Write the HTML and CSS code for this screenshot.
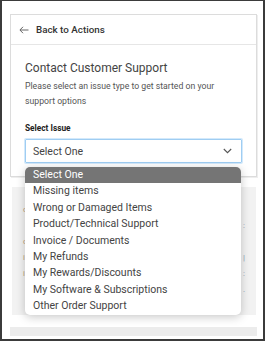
FILE: index.html
```html
<!DOCTYPE html>
<html>
<head>
<meta charset="utf-8">
<link rel="stylesheet" href="styles.css">
</head>
<body>
<div class="frame">
  <div class="card">
    <div class="card-head">
      <svg class="back-icon" width="10" height="8" viewBox="0 0 10 8"><path d="M9.5 4H1M4 0.8L0.9 4L4 7.2" fill="none" stroke="#666" stroke-width="1"/></svg>
      <span class="back-text">Back to Actions</span>
    </div>
    <div class="card-body">
      <h1 class="title">Contact Customer Support</h1>
      <p class="desc">Please select an issue type to get started on your support options</p>
      <div class="label">Select Issue</div>
      <div class="select">
        <span>Select One</span>
        <svg class="chev" width="9" height="6" viewBox="0 0 9 6"><path d="M0.8 1L4.5 4.7L8.2 1" fill="none" stroke="#555" stroke-width="1.1"/></svg>
      </div>
    </div>
  </div>
  <div class="under">
    <div class="under-row"><span class="mk">c</span><span class="mk-r"></span></div>
    <div class="under-row"><span class="mk"></span><span class="mk-r">:</span></div>
    <div class="under-row"><span class="mk">c</span><span class="mk-r"></span></div>
    <div class="under-row"><span class="mk">i</span><span class="mk-r">|</span></div>
    <div class="under-row"><span class="mk">i</span><span class="mk-r">:</span></div>
    <div class="under-row"><span class="mk"></span><span class="mk-r">.</span></div>
  </div>
  <div class="bottom-strip"></div>
  <ul class="menu">
    <li class="active">Select One</li>
    <li>Missing items</li>
    <li>Wrong or Damaged Items</li>
    <li>Product/Technical Support</li>
    <li>Invoice / Documents</li>
    <li>My Refunds</li>
    <li>My Rewards/Discounts</li>
    <li>My Software &amp; Subscriptions</li>
    <li>Other Order Support</li>
  </ul>
</div>
</body>
</html>
```
FILE: styles.css
```css
* { box-sizing: border-box; }
html, body { margin: 0; padding: 0; background: #fff; }
body { font-family: Roboto, "Liberation Sans", sans-serif; color: #444; }
.frame {
  position: relative;
  width: 265px;
  height: 341px;
  border: 2px solid #3b3b3b;
  border-top-width: 1px;
  padding: 13px 0 0 8px;
  overflow: hidden;
  background: #fff;
}
.card {
  width: 247px;
  border: 1px solid #dcdcdc;
  box-shadow: 1px 1px 0 #eee;
  background: #fff;
}
.card-head {
  height: 30px;
  display: flex;
  align-items: center;
  padding-left: 8px;
  border-bottom: 1px solid #e6e6e6;
}
.back-icon { margin-right: 7px; }
.back-text { font-size: 9.8px; font-weight: 500; color: #333; }
.card-body { padding: 15px 14px 13px 14px; }
.title { margin: 0; font-size: 12px; font-weight: 400; line-height: 16px; color: #444; }
.desc { margin: 3px 0 0; font-size: 8.7px; line-height: 15px; color: #555; }
.label { margin-top: 12px; font-size: 8.3px; font-weight: 700; line-height: 14px; color: #222; }
.select {
  margin-top: 4px;
  height: 24px;
  width: 217px;
  border: 1px solid #9fcdf2;
  box-shadow: 0 0 0 1px #d3e9fb;
  border-radius: 1px;
  display: flex;
  align-items: center;
  justify-content: space-between;
  padding: 0 9px 0 7px;
  font-size: 10.5px;
  color: #444;
}
.under {
  margin: 10px 0 0 2px;
  width: 244px;
  height: 128px;
  background: #f2f2f2;
  padding: 18px 11px 0;
}
.under-row {
  height: 16px;
  display: flex;
  justify-content: space-between;
  font-size: 8px;
  color: #c2a581;
}
.mk-r { color: #8e9db4; }
.bottom-strip {
  margin: 12px 0 0 0;
  width: 247px;
  height: 9px;
  background: #ececec;
}
.menu {
  position: absolute;
  left: 23px;
  top: 166px;
  width: 216px;
  margin: 0;
  padding: 0;
  list-style: none;
  background: #fff;
  border-radius: 5px;
  overflow: hidden;
  box-shadow: 0 2px 10px rgba(0,0,0,0.22);
}
.menu li {
  height: 16.4px;
  line-height: 16.4px;
  padding-left: 8px;
  font-size: 10.5px;
  color: #444;
  white-space: nowrap;
}
.menu li.active { background: #757575; color: #fff; }
```
